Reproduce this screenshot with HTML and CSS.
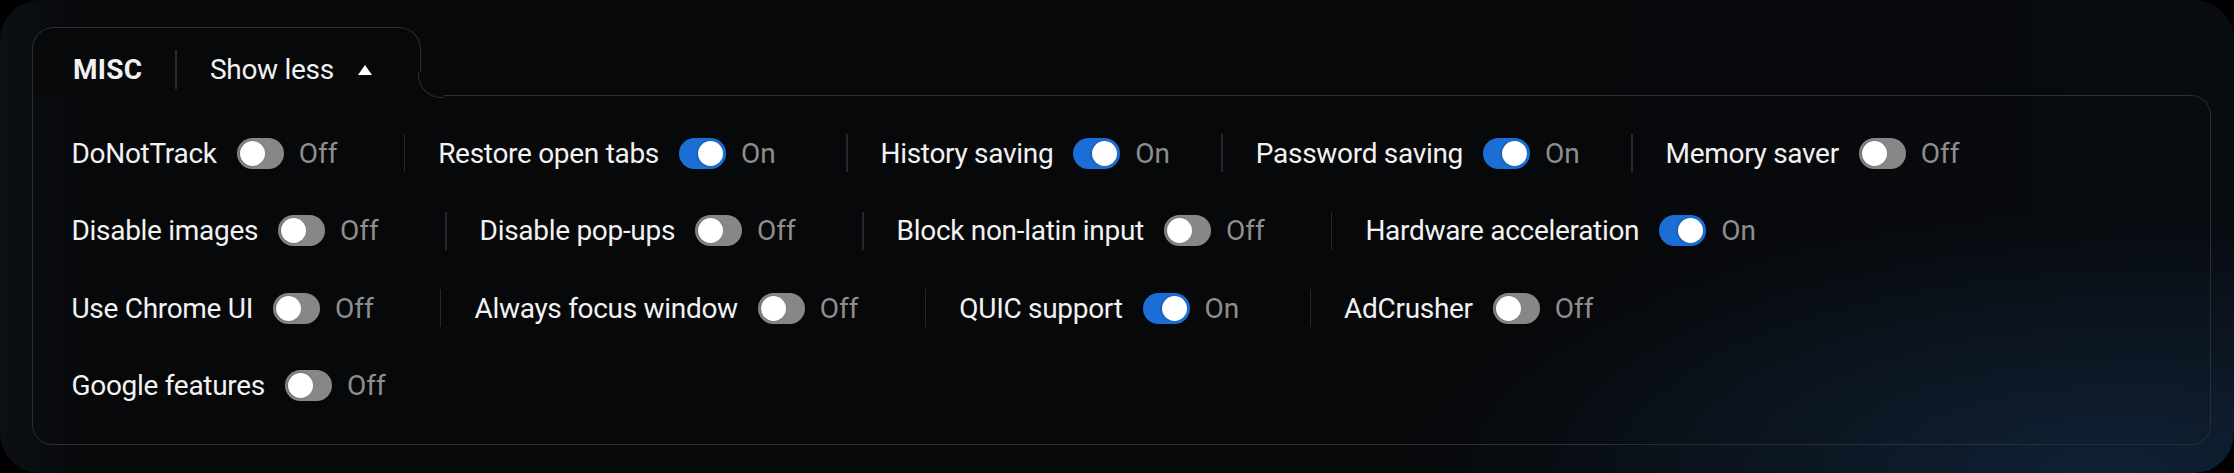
FILE: index.html
```html
<!DOCTYPE html>
<html lang="en">
<head>
  <meta charset="UTF-8" />
  <meta name="viewport" content="width=device-width, initial-scale=1.0"/>
  <title>Misc settings</title>
  <link rel="stylesheet" href="styles.css">
</head>
<body>

  <div class="card">
    <section class="misc">
      <div class="misc-tab">
        <span class="misc-title">MISC</span>
        <span class="tab-sep"></span>
        <button class="show-less">Show less <span class="caret"></span></button>
      </div>

      <div class="misc-panel">
        <div class="row">
          <div class="opt"><span class="opt-label">DoNotTrack</span><span class="switch"></span><span class="state">Off</span></div>
          <span class="sep"></span>
          <div class="opt"><span class="opt-label">Restore open tabs</span><span class="switch on"></span><span class="state">On</span></div>
          <span class="sep"></span>
          <div class="opt compact"><span class="opt-label">History saving</span><span class="switch on"></span><span class="state">On</span></div>
          <span class="sep"></span>
          <div class="opt compact"><span class="opt-label">Password saving</span><span class="switch on"></span><span class="state">On</span></div>
          <span class="sep"></span>
          <div class="opt"><span class="opt-label">Memory saver</span><span class="switch"></span><span class="state">Off</span></div>
        </div>

        <div class="row">
          <div class="opt"><span class="opt-label">Disable images</span><span class="switch"></span><span class="state">Off</span></div>
          <span class="sep"></span>
          <div class="opt"><span class="opt-label">Disable pop-ups</span><span class="switch"></span><span class="state">Off</span></div>
          <span class="sep"></span>
          <div class="opt"><span class="opt-label">Block non-latin input</span><span class="switch"></span><span class="state">Off</span></div>
          <span class="sep"></span>
          <div class="opt"><span class="opt-label">Hardware acceleration</span><span class="switch on"></span><span class="state">On</span></div>
        </div>

        <div class="row">
          <div class="opt"><span class="opt-label">Use Chrome UI</span><span class="switch"></span><span class="state">Off</span></div>
          <span class="sep"></span>
          <div class="opt"><span class="opt-label">Always focus window</span><span class="switch"></span><span class="state">Off</span></div>
          <span class="sep"></span>
          <div class="opt"><span class="opt-label">QUIC support</span><span class="switch on"></span><span class="state">On</span></div>
          <span class="sep"></span>
          <div class="opt"><span class="opt-label">AdCrusher</span><span class="switch"></span><span class="state">Off</span></div>
        </div>

        <div class="row">
          <div class="opt"><span class="opt-label">Google features</span><span class="switch"></span><span class="state">Off</span></div>
        </div>
      </div>
    </section>
  </div>

</body>
</html>
```

FILE: styles.css
```css
* {
  margin: 0;
  padding: 0;
  box-sizing: border-box;
}

body {
  background-color: #000000;
  color: #f2f2f2;
  font-family: 'Roboto', 'Noto Sans', sans-serif;
  font-size: 28px;
}

.card {
  width: 2234px;
  height: 473px;
  padding: 27px 23px 27px 32px;
  border-radius: 40px;
  background:
    radial-gradient(ellipse 700px 260px at 94% 100%, rgba(22, 52, 84, 0.55), rgba(22, 52, 84, 0) 100%),
    linear-gradient(90deg, #0c1015 0%, #07080a 4%, #07080a 70%, #080b10 100%);
}

.misc {
  display: flex;
  flex-direction: column;
}

/* tab on top of the panel */
.misc-tab {
  display: flex;
  align-items: center;
  width: max-content;
  padding: 22px 48px 7px 40px;
  border: 1.5px solid #2a2d32;
  border-bottom: none;
  border-radius: 22px 22px 0 0;
  background-color: #07080a;
  margin-bottom: -1.5px;
  position: relative;
  z-index: 2;
}
.misc-tab::before,
.misc-tab::after {
  content: "";
  position: absolute;
  left: calc(100% - 1.5px);
  bottom: -1.5px;
  width: 25px;
  height: 25px;
  background-color: #07080a;
}
.misc-tab::after {
  border-left: 1.5px solid #2a2d32;
  border-bottom: 1.5px solid #2a2d32;
  border-bottom-left-radius: 23px;
}

.misc-title {
  font-weight: 700;
  font-size: 28px;
  letter-spacing: 0.3px;
}
.tab-sep {
  width: 1.5px;
  height: 39px;
  background-color: #2a2d32;
  margin: 0 33px;
}
.show-less {
  display: flex;
  align-items: center;
  gap: 24px;
  background: none;
  border: none;
  color: #f2f2f2;
  font-family: inherit;
  font-size: 28px;
  letter-spacing: -0.3px;
  cursor: pointer;
}
.caret {
  width: 0;
  height: 0;
  border-left: 7px solid transparent;
  border-right: 7px solid transparent;
  border-bottom: 10px solid #ffffff;
}

.misc-panel {
  display: flex;
  flex-direction: column;
  gap: 39.5px;
  padding: 38.5px 0 39px 38.5px;
  border: 1.5px solid #2a2d32;
  border-radius: 0 20px 20px 20px;
}

.row {
  display: flex;
  align-items: center;
  gap: 33px;
  height: 38px;
}
.sep {
  width: 1.5px;
  height: 38px;
  background-color: #25282c;
}

.opt {
  display: flex;
  align-items: center;
}
.opt-label {
  margin-right: 20px;
  letter-spacing: -0.3px;
}
.state {
  min-width: 72px;
  margin-left: 15px;
  color: #8e8e8e;
}
.opt.compact .state {
  min-width: 53px;
}

.switch {
  width: 47px;
  height: 31px;
  border-radius: 16px;
  background-color: #878787;
  position: relative;
}
.switch::after {
  content: "";
  position: absolute;
  top: 3px;
  left: 3px;
  width: 25px;
  height: 25px;
  border-radius: 50%;
  background-color: #ffffff;
  box-shadow: -1px 0 2px rgba(0, 0, 0, 0.25);
}
.switch.on {
  background-color: #1b6ed6;
}
.switch.on::after {
  left: 19px;
}
```
